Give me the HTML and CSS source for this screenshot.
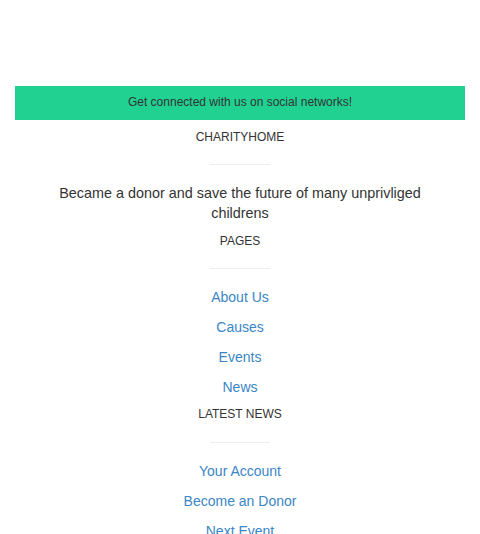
FILE: index.html
```html
<!DOCTYPE html>
<html lang="en">
<head>
<meta charset="utf-8">
<title>CharityHome footer</title>
<link rel="stylesheet" href="styles.css">
</head>
<body>
<footer class="page-footer">
  <div class="container">
    <div class="social-bar">
      <span>Get connected with us on social networks!</span>
    </div>
    <div class="footer-col">
      <h6 class="col-title">CharityHome</h6>
      <hr class="divider">
      <p class="about">Became a donor and save the future of many unprivliged childrens</p>
    </div>
    <div class="footer-col">
      <h6 class="col-title">Pages</h6>
      <hr class="divider">
      <p class="link-row"><a href="#">About Us</a></p>
      <p class="link-row"><a href="#">Causes</a></p>
      <p class="link-row"><a href="#">Events</a></p>
      <p class="link-row"><a href="#">News</a></p>
    </div>
    <div class="footer-col">
      <h6 class="col-title">Latest News</h6>
      <hr class="divider">
      <p class="link-row"><a href="#">Your Account</a></p>
      <p class="link-row"><a href="#">Become an Donor</a></p>
      <p class="link-row"><a href="#">Next Event</a></p>
    </div>
  </div>
</footer>
</body>
</html>
```

FILE: styles.css
```css
html, body {
  margin: 0;
  padding: 0;
  background: #fff;
}
body {
  font-family: "Liberation Sans", Arial, sans-serif;
  font-size: 14px;
  line-height: 1.42857;
  color: #333;
}
.page-footer {
  padding-top: 86px;
}
.container {
  padding: 0 15px;
  text-align: center;
}
.social-bar {
  background: #21d192;
  height: 34px;
  display: flex;
  align-items: center;
  justify-content: center;
  font-size: 12px;
  color: #333;
}
.footer-col {
  display: flex;
  flex-direction: column;
  align-items: center;
}
.col-title {
  margin: 9px 0 0;
  font-size: 12px;
  font-weight: normal;
  line-height: 17px;
  text-transform: uppercase;
}
.divider {
  width: 60px;
  margin: 18.5px 0 18px;
  border: 0;
  border-top: 1px solid #eee;
}
.footer-col:nth-child(2) .divider {
  margin-top: 17.5px;
}
.about {
  margin: 0;
  padding: 0 20px;
  font-size: 14.4px;
  line-height: 20.6px;
}
.link-row {
  margin: 0 0 10px;
  line-height: 20px;
}
.link-row:last-child {
  margin-bottom: 0;
}
.link-row a {
  color: #3a86c6;
  text-decoration: none;
}
```
